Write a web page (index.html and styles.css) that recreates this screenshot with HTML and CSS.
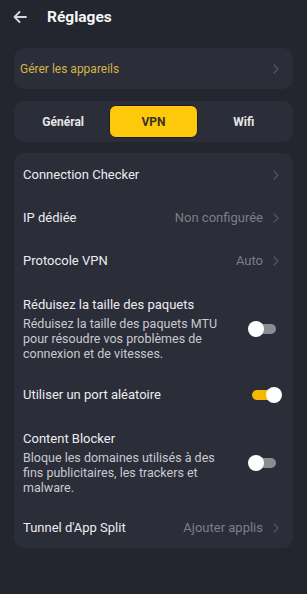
FILE: index.html
```html
<!DOCTYPE html>
<html lang="fr">
<head>
<meta charset="utf-8">
<link rel="stylesheet" href="styles.css">
</head>
<body>
<div class="screen">
  <header class="topbar">
    <svg class="back" width="14" height="12" viewBox="0 0 14 12"><path d="M13 6H1.5M6.5 1L1.5 6l5 5" fill="none" stroke="#d6d6dc" stroke-width="1.8" stroke-linecap="round" stroke-linejoin="round"/></svg>
    <h1 class="title">Réglages</h1>
  </header>

  <div class="card devices">
    <span class="devices-label">Gérer les appareils</span>
    <svg class="chev" width="6" height="10" viewBox="0 0 6 10"><path d="M1 1l4 4-4 4" fill="none" stroke="#4f515c" stroke-width="1.5" stroke-linecap="round" stroke-linejoin="round"/></svg>
  </div>

  <div class="card tabs">
    <div class="tab">Général</div>
    <div class="tab active">VPN</div>
    <div class="tab">Wifi</div>
  </div>

  <div class="card list">
    <div class="row">
      <span class="label">Connection Checker</span>
      <span class="right"><svg class="chev" width="6" height="10" viewBox="0 0 6 10"><path d="M1 1l4 4-4 4" fill="none" stroke="#4f515c" stroke-width="1.5" stroke-linecap="round" stroke-linejoin="round"/></svg></span>
    </div>
    <div class="row">
      <span class="label">IP dédiée</span>
      <span class="right"><span class="value">Non configurée</span><svg class="chev" width="6" height="10" viewBox="0 0 6 10"><path d="M1 1l4 4-4 4" fill="none" stroke="#4f515c" stroke-width="1.5" stroke-linecap="round" stroke-linejoin="round"/></svg></span>
    </div>
    <div class="row">
      <span class="label">Protocole VPN</span>
      <span class="right"><span class="value">Auto</span><svg class="chev" width="6" height="10" viewBox="0 0 6 10"><path d="M1 1l4 4-4 4" fill="none" stroke="#4f515c" stroke-width="1.5" stroke-linecap="round" stroke-linejoin="round"/></svg></span>
    </div>
    <div class="row tall">
      <div class="text">
        <div class="label">Réduisez la taille des paquets</div>
        <div class="desc">Réduisez la taille des paquets MTU pour résoudre vos problèmes de connexion et de vitesses.</div>
      </div>
      <span class="toggle"><span class="knob"></span></span>
    </div>
    <div class="row">
      <span class="label">Utiliser un port aléatoire</span>
      <span class="toggle on"><span class="knob"></span></span>
    </div>
    <div class="row tall">
      <div class="text">
        <div class="label">Content Blocker</div>
        <div class="desc">Bloque les domaines utilisés à des fins publicitaires, les trackers et malware.</div>
      </div>
      <span class="toggle"><span class="knob"></span></span>
    </div>
    <div class="row last">
      <span class="label">Tunnel d'App Split</span>
      <span class="right"><span class="value">Ajouter applis</span><svg class="chev" width="6" height="10" viewBox="0 0 6 10"><path d="M1 1l4 4-4 4" fill="none" stroke="#4f515c" stroke-width="1.5" stroke-linecap="round" stroke-linejoin="round"/></svg></span>
    </div>
  </div>
</div>
</body>
</html>
```

FILE: styles.css
```css
* { box-sizing: border-box; margin: 0; padding: 0; }
html, body { background: #23252f; }
body {
  width: 307px;
  height: 594px;
  overflow: hidden;
  font-family: Roboto, "Liberation Sans", sans-serif;
  color: #e9e9ee;
}
.screen { padding: 0 14px; }
.topbar {
  height: 33px;
  display: flex;
  align-items: center;
}
.back { margin-left: -1px; }
.title {
  font-size: 15.5px;
  font-weight: 700;
  color: #f4f4f6;
  margin-left: 20px;
}
.card {
  background: #2b2d38;
  border-radius: 10px;
}
.devices {
  margin-top: 15px;
  height: 41px;
  display: flex;
  align-items: center;
  justify-content: space-between;
  padding: 0 14px 0 6px;
}
.devices-label {
  font-size: 12px;
  color: #d5b449;
}
.chev { display: block; }
.tabs {
  margin-top: 12px;
  height: 41px;
  padding: 4px;
  display: grid;
  grid-template-columns: 1fr 1fr 1fr;
}
.tab {
  display: flex;
  align-items: center;
  justify-content: center;
  font-size: 12px;
  font-weight: 700;
  color: #e6e6ea;
  border-radius: 7px;
}
.tab.active {
  background: #fdc90a;
  color: #3a3322;
  border: 1px solid #1d1e25;
  margin: 0 1px;
}
.list {
  margin-top: 11px;
  padding: 0 14px 0 9px;
}
.row {
  display: flex;
  align-items: center;
  justify-content: space-between;
  height: 43px;
}
.row.tall {
  height: auto;
  padding: 15px 0 12px;
}
.row.last { height: 41px; }
.label {
  font-size: 13px;
  color: #ececf0;
  line-height: 16px;
}
.right {
  display: flex;
  align-items: center;
  gap: 10px;
}
.value {
  font-size: 13px;
  color: #7c7e89;
}
.text { width: 212px; }
.desc {
  margin-top: 3px;
  font-size: 12.5px;
  line-height: 15px;
  color: #c9cad0;
}
.toggle {
  position: relative;
  width: 24px;
  height: 10px;
  border-radius: 5px;
  background: #8b8c92;
  margin-right: 3px;
  flex: none;
}
.toggle .knob {
  position: absolute;
  left: -4px;
  top: -3px;
  width: 16px;
  height: 16px;
  border-radius: 50%;
  background: #ffffff;
}
.toggle.on { background: #f6b800; }
.toggle.on .knob { left: auto; right: -6px; }
```
